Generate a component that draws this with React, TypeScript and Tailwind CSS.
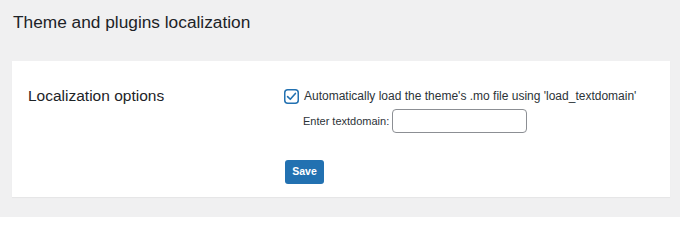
import React from "react";

export default function App() {
  return (
    <div className="w-[680px] h-[217px] bg-[#f0f0f1] px-[12px] pt-[10px] font-['Liberation_Sans',Arial,sans-serif] overflow-hidden">
      <h1 className="h-[24px] leading-[24px] text-[17.3px] text-[#1d2327] pl-[1px] font-normal">
        Theme and plugins localization
      </h1>
      <div className="mt-[27px] w-[658px] h-[136px] bg-white shadow-[0_1px_1px_rgba(0,0,0,0.04)] flex pl-[16px] pt-[25px]">
        <div className="w-[256px] shrink-0 h-[20px] leading-[20px] text-[15.5px] text-[#1d2327]">
          Localization options
        </div>
        <div className="flex flex-col">
          <div className="flex items-center h-[20px] gap-[5px]">
            <svg width="15" height="15" viewBox="0 0 15 15" className="shrink-0">
              <rect x="0.75" y="0.75" width="13.5" height="13.5" rx="3" fill="white" stroke="#2271b1" strokeWidth="1.5" />
              <path d="M3.6 7.6 L6.3 10.3 L11.4 4.4" fill="none" stroke="#2271b1" strokeWidth="1.6" strokeLinecap="round" strokeLinejoin="round" />
            </svg>
            <span className="text-[12px] leading-[20px] text-[#2c3338] whitespace-nowrap">
              Automatically load the theme's .mo file using 'load_textdomain'
            </span>
          </div>
          <div className="flex items-center mt-[3px] pl-[19px] gap-[3px]">
            <span className="text-[11px] text-[#2c3338] whitespace-nowrap">
              Enter textdomain:
            </span>
            <input
              type="text"
              className="w-[135px] h-[24px] border border-[#8c8f94] rounded-[4px] bg-white outline-none px-[6px] text-[12px]"
            />
          </div>
          <div className="mt-[27px] pl-[1px]">
            <button className="w-[39px] h-[24px] bg-[#2271b1] rounded-[3px] text-white text-[10.5px] font-bold flex items-center justify-center">
              Save
            </button>
          </div>
        </div>
      </div>
    </div>
  );
}
